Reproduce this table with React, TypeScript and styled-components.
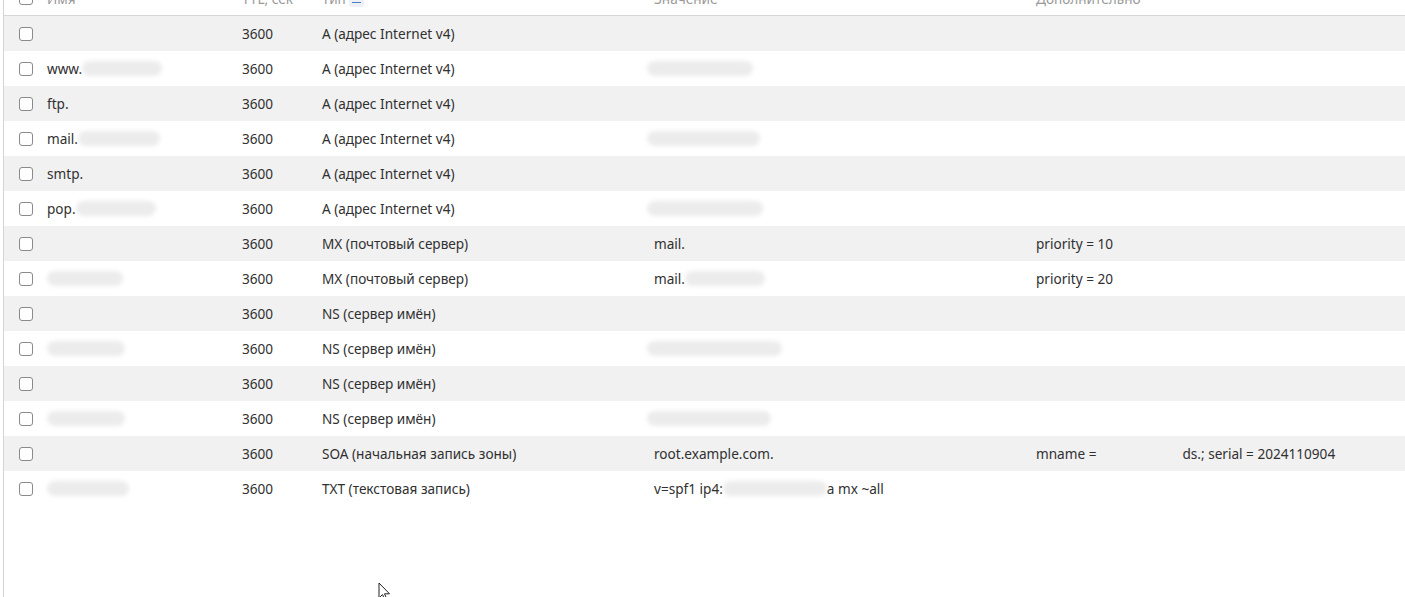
import React from "react";
import styled, { createGlobalStyle } from "styled-components";

const GlobalStyle = createGlobalStyle`
  html, body {
    margin: 0;
    padding: 0;
    background: #ffffff;
  }
  body {
    font-family: "Noto Sans", "Open Sans", sans-serif;
    font-size: 13.6px;
    color: #303030;
    overflow: hidden;
  }
`;

type Record = {
  name?: string;
  nameBlob?: number;
  type: string;
  value?: string;
  valueBlob?: number;
  valueTail?: string;
  extra?: string;
  extraBlob?: number;
  extraTail?: string;
};

const records: Record[] = [
  { type: "A (адрес Internet v4)" },
  { name: "www.", nameBlob: 80, type: "A (адрес Internet v4)", valueBlob: 106 },
  { name: "ftp.", type: "A (адрес Internet v4)" },
  { name: "mail.", nameBlob: 82, type: "A (адрес Internet v4)", valueBlob: 113 },
  { name: "smtp.", type: "A (адрес Internet v4)" },
  { name: "pop.", nameBlob: 80, type: "A (адрес Internet v4)", valueBlob: 116 },
  { type: "MX (почтовый сервер)", value: "mail.", extra: "priority = 10" },
  { nameBlob: 76, type: "MX (почтовый сервер)", value: "mail.", valueBlob: 80, extra: "priority = 20" },
  { type: "NS (сервер имён)" },
  { nameBlob: 78, type: "NS (сервер имён)", valueBlob: 135 },
  { type: "NS (сервер имён)" },
  { nameBlob: 78, type: "NS (сервер имён)", valueBlob: 124 },
  {
    type: "SOA (начальная запись зоны)",
    value: "root.example.com.",
    extra: "mname = ",
    extraBlob: 86,
    extraTail: "ds.; serial = 2024110904",
  },
  {
    nameBlob: 82,
    type: "TXT (текстовая запись)",
    value: "v=spf1 ip4:",
    valueBlob: 104,
    valueTail: "a mx ~all",
  },
];

export default function App() {
  return (
    <>
      <GlobalStyle />
      <Panel>
        <Table>
          <HeaderRow>
            <HeadCheck>
              <Box />
            </HeadCheck>
            <HeadCell>Имя</HeadCell>
            <HeadCell>TTL, сек</HeadCell>
            <HeadCell>
              Тип <SortMark />
            </HeadCell>
            <HeadCell>Значение</HeadCell>
            <HeadCell>Дополнительно</HeadCell>
          </HeaderRow>
          {records.map((r, i) => {
            const striped = i % 2 === 0;
            return (
              <Row key={i} $striped={striped}>
                <CheckCell>
                  <Box />
                </CheckCell>
                <Cell>
                  {r.name}
                  {r.nameBlob && !striped && <Smudge $w={r.nameBlob} />}
                </Cell>
                <Cell>3600</Cell>
                <Cell>{r.type}</Cell>
                <Cell>
                  {r.value}
                  {r.valueBlob && !striped && <Smudge $w={r.valueBlob} $lead={r.value ? 0 : -7} />}
                  {r.valueBlob && striped && <Gap $w={r.valueBlob} />}
                  {r.valueTail}
                </Cell>
                <Cell>
                  {r.extra}
                  {r.extraBlob && <Gap $w={r.extraBlob} />}
                  {r.extraTail}
                </Cell>
              </Row>
            );
          })}
        </Table>
        <Cursor width="14" height="20" viewBox="0 0 14 20">
          <path d="M1 1 L1 16 L4.5 12.5 L7 18.5 L9 17.5 L6.5 11.8 L11.5 11.8 Z" fill="#ffffff" stroke="#222" strokeWidth="1" />
        </Cursor>
      </Panel>
    </>
  );
}

const Panel = styled.div`
  position: relative;
  margin-left: 3px;
  min-height: 100vh;
  border-left: 1px solid #d4d4d4;
  box-sizing: border-box;
`;

const Table = styled.div`
  display: flex;
  flex-direction: column;
`;

const columns = "43px 195px 80px 332px 382px 1fr";

/* header is scrolled mostly out of view, only the bottom of the labels shows */
const HeaderRow = styled.div`
  display: grid;
  grid-template-columns: ${columns};
  grid-template-rows: 15px;
  height: 15px;
  overflow: hidden;
  align-items: end;
  border-bottom: 1px solid #d6d6d6;
  color: #9a9a9a;
  line-height: 16px;
`;

const HeadCell = styled.div`
  display: flex;
  align-items: center;
  gap: 3px;
  white-space: nowrap;
  margin-bottom: 8px;
`;

const HeadCheck = styled.div`
  padding-left: 15px;
  margin-bottom: 10px;
`;

const SortMark = styled.span`
  display: inline-block;
  width: 15px;
  height: 16px;
  border-radius: 3px;
  background: #eef0f3;
  position: relative;
  &::after {
    content: "";
    position: absolute;
    left: 3px;
    right: 3px;
    top: 11px;
    height: 1px;
    background: #4a7fd0;
  }
`;

const Row = styled.div<{ $striped: boolean }>`
  display: grid;
  grid-template-columns: ${columns};
  height: 35px;
  align-items: center;
  background: ${({ $striped }) => ($striped ? "#f1f1f1" : "#ffffff")};
`;

const CheckCell = styled.div`
  display: flex;
  align-items: center;
  padding-left: 15px;
`;

const Box = styled.span`
  display: block;
  width: 12px;
  height: 12px;
  border: 1px solid #8a8a8a;
  border-radius: 3px;
  background: #ffffff;
`;

const Cell = styled.div`
  display: flex;
  align-items: center;
  white-space: nowrap;
`;

const Smudge = styled.span<{ $w: number; $lead?: number }>`
  display: inline-block;
  width: ${({ $w }) => $w}px;
  height: 15px;
  margin-left: ${({ $lead }) => $lead ?? 0}px;
  border-radius: 8px;
  background: #ececec;
  filter: blur(2px);
`;

const Gap = styled.span<{ $w: number }>`
  display: inline-block;
  width: ${({ $w }) => $w}px;
`;

const Cursor = styled.svg`
  position: absolute;
  left: 374px;
  top: 582px;
`;
